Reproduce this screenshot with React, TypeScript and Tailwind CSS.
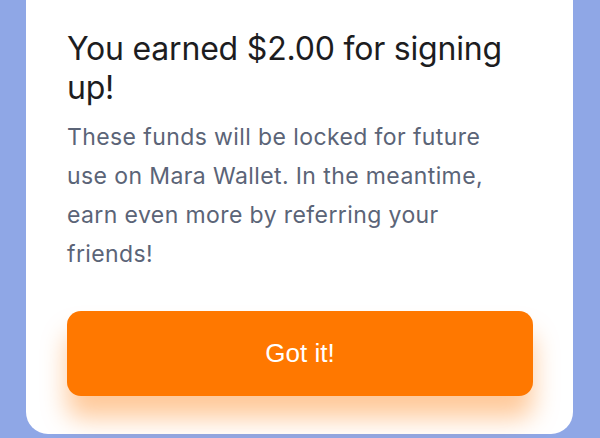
import { JSX } from 'react';

function App(): JSX.Element {
  return (
    <div className="h-[438px] w-[600px] overflow-hidden bg-[#8fa7e6] pl-[26px] pr-[27px]">
      <div className="flex h-[434px] flex-col rounded-b-[22px] bg-white pl-[41px] pr-[40px] pt-[29px]" style={{ fontFamily: 'Inter, "Liberation Sans", sans-serif' }}>
        <h1 className="text-[32px] leading-[39px] font-normal tracking-[-0.2px] text-[#1d1d1f]">You earned $2.00 for signing up!</h1>
        <p className="mt-[11px] w-[445px] text-[23px] leading-[39px] tracking-[0.4px] text-[#5b6477]">
          These funds will be locked for future use on Mara Wallet. In the meantime, earn even more by referring your friends!
        </p>
        <button
          type="button"
          className="mt-[37px] h-[85px] w-full rounded-[14px] bg-[#ff7800] text-[26px] text-white shadow-[0_22px_26px_rgba(255,120,0,0.4)]"
          style={{ fontFamily: '"Liberation Sans", Arial, sans-serif' }}
        >
          Got it!
        </button>
      </div>
    </div>
  );
}

export default App;
